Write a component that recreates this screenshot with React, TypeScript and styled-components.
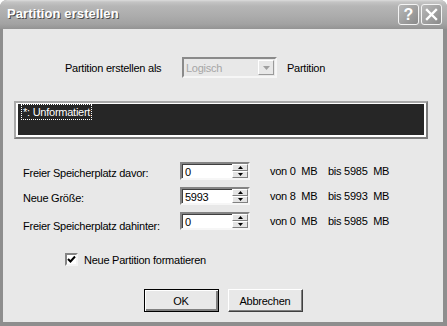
import { createGlobalStyle, styled } from "styled-components";

const GlobalStyle = createGlobalStyle`
    html, body {
        margin: 0;
        padding: 0;
        background: #ffffff;
    }
    * {
        box-sizing: border-box;
    }
`;

const App = () => {
    return (
        <>
            <GlobalStyle />
            <Window>
                <TitleBar>
                    <Title>Partition erstellen</Title>
                    <CaptionButtons>
                        <CaptionButton>?</CaptionButton>
                        <CaptionButton>
                            <svg width="13" height="13" viewBox="0 0 13 13">
                                <path d="M2 2 L11 11 M11 2 L2 11" stroke="#ffffff" strokeWidth="2.4" strokeLinecap="square" />
                            </svg>
                        </CaptionButton>
                    </CaptionButtons>
                </TitleBar>
                <Body>
                    <ComboRow>
                        <ComboLabel>Partition erstellen als</ComboLabel>
                        <Combo>
                            <ComboText>Logisch</ComboText>
                            <ComboButton>
                                <svg width="7" height="4" viewBox="0 0 7 4">
                                    <path d="M0 0 H7 L3.5 4 Z" fill="#a0a0a0" />
                                </svg>
                            </ComboButton>
                        </Combo>
                        <span>Partition</span>
                    </ComboRow>

                    <ListBox>
                        <ListInner>
                            <ListItem>*: Unformatiert</ListItem>
                        </ListInner>
                    </ListBox>

                    <SpinRows>
                        <SpinField label="Freier Speicherplatz davor:" value="0" from="0" to="5985" />
                        <SpinField label="Neue Größe:" value="5993" from="8" to="5993" />
                        <SpinField label="Freier Speicherplatz dahinter:" value="0" from="0" to="5985" low />
                    </SpinRows>

                    <CheckRow>
                        <CheckBox>
                            <svg width="9" height="9" viewBox="0 0 9 9">
                                <path d="M1 4 L3.5 6.5 L8 1.5" stroke="#000000" strokeWidth="2" fill="none" />
                            </svg>
                        </CheckBox>
                        <span>Neue Partition formatieren</span>
                    </CheckRow>

                    <ButtonRow>
                        <DialogButton $default>OK</DialogButton>
                        <DialogButton>Abbrechen</DialogButton>
                    </ButtonRow>
                </Body>
            </Window>
        </>
    );
};

type SpinProps = {
    label: string;
    value: string;
    from: string;
    to: string;
    low?: boolean;
};

const SpinField = ({ label, value, from, to, low }: SpinProps) => (
    <SpinRow>
        <SpinLabel $low={low}>{label}</SpinLabel>
        <SpinBox>
            <SpinValue>{value}</SpinValue>
            <SpinButtons>
                <SpinButton>
                    <svg width="5" height="3" viewBox="0 0 5 3">
                        <path d="M0 3 H5 L2.5 0 Z" fill="#000000" />
                    </svg>
                </SpinButton>
                <SpinButton>
                    <svg width="5" height="3" viewBox="0 0 5 3">
                        <path d="M0 0 H5 L2.5 3 Z" fill="#000000" />
                    </svg>
                </SpinButton>
            </SpinButtons>
        </SpinBox>
        <RangeFrom>{`von ${from}  MB`}</RangeFrom>
        <RangeTo>{`bis ${to}  MB`}</RangeTo>
    </SpinRow>
);

const Window = styled.div`
    width: 447px;
    height: 326px;
    display: flex;
    flex-direction: column;
    background: #8e8e8e;
    border-radius: 7px 7px 0 0;
    overflow: hidden;
    font-family: "Liberation Sans", Arial, sans-serif;
    font-size: 11px;
    letter-spacing: -0.25px;
    color: #000000;
`;

const TitleBar = styled.div`
    height: 29px;
    flex-shrink: 0;
    display: flex;
    align-items: center;
    justify-content: space-between;
    padding: 0 5px 2px 7px;
    background: linear-gradient(
        #dcdcdc 0px,
        #c4c4c4 2px,
        #b6b6b6 6px,
        #acacac 16px,
        #a2a2a2 24px,
        #939393 29px
    );
`;

const Title = styled.div`
    font-size: 13px;
    font-weight: bold;
    color: #ffffff;
    text-shadow: 1px 1px 0 #4a4a4a;
    letter-spacing: 0.1px;
`;

const CaptionButtons = styled.div`
    display: flex;
    gap: 2px;
    margin-top: 2px;
`;

const CaptionButton = styled.div`
    width: 21px;
    height: 21px;
    border: 1px solid #f4f4f4;
    border-radius: 3px;
    background: linear-gradient(135deg, #b8b8b8, #8a8a8a);
    display: flex;
    align-items: center;
    justify-content: center;
    color: #ffffff;
    font-size: 16px;
    font-weight: bold;
    letter-spacing: 0;
`;

const Body = styled.div`
    flex: 1;
    margin: 0 4px 4px 3px;
    background: #e8e8e8;
    display: flex;
    flex-direction: column;
    padding-top: 28px;
`;

const ComboRow = styled.div`
    height: 21px;
    display: flex;
    align-items: center;
    padding-left: 62px;
`;

const ComboLabel = styled.span`
    width: 117px;
`;

const Combo = styled.div`
    width: 95px;
    height: 21px;
    margin-right: 10px;
    display: flex;
    align-items: center;
    justify-content: space-between;
    border: 2px solid;
    border-color: #8a8a8a #f6f6f6 #f6f6f6 #8a8a8a;
    background: #e8e8e8;
    padding: 0 1px 0 2px;
`;

const ComboText = styled.span`
    color: #a6a6a6;
`;

const ComboButton = styled.div`
    width: 16px;
    height: 15px;
    display: flex;
    align-items: center;
    justify-content: center;
    border: 1px solid;
    border-color: #ffffff #9a9a9a #9a9a9a #ffffff;
    background: #e8e8e8;
`;

const ListBox = styled.div`
    margin: 23px 0 0 11px;
    width: 414px;
    height: 38px;
    border: 2px solid;
    border-color: #a8a8a8 #7c7c7c #7c7c7c #a8a8a8;
`;

const ListInner = styled.div`
    height: 100%;
    border-style: solid;
    border-color: #ffffff;
    border-width: 1px 2px 2px 2px;
    background: #262626;
    padding: 0 0 0 3px;
`;

const ListItem = styled.span`
    display: inline-block;
    height: 16px;
    line-height: 14px;
    padding: 0 1px;
    border: 1px dotted #ffffff;
    color: #ffffff;
`;

const SpinRows = styled.div`
    margin-top: 23px;
    display: flex;
    flex-direction: column;
    gap: 7px;
`;

const SpinRow = styled.div`
    height: 18px;
    display: flex;
    align-items: center;
    padding-left: 20px;
`;

const SpinLabel = styled.span<{ $low?: boolean }>`
    width: 157px;
    position: relative;
    top: ${(p) => (p.$low ? "5px" : "2px")};
`;

const SpinBox = styled.div`
    width: 70px;
    height: 18px;
    display: flex;
    align-items: stretch;
    justify-content: space-between;
    border: 2px solid;
    border-color: #848484 #f6f6f6 #f6f6f6 #848484;
    box-shadow: inset 1px 1px 0 #404040;
    background: #ffffff;
    padding: 1px 0 0 3px;
`;

const SpinValue = styled.span`
    line-height: 14px;
`;

const SpinButtons = styled.div`
    width: 16px;
    display: flex;
    flex-direction: column;
    margin-top: -1px;
`;

const SpinButton = styled.div`
    flex: 1;
    display: flex;
    align-items: center;
    justify-content: center;
    border: 1px solid;
    border-color: #ffffff #808080 #808080 #ffffff;
    background: #e4e4e4;
`;

const RangeFrom = styled.span`
    margin-left: 20px;
    width: 58px;
    white-space: pre;
`;

const RangeTo = styled.span`
    white-space: pre;
`;

const CheckRow = styled.div`
    margin-top: 23px;
    padding-left: 62px;
    display: flex;
    align-items: center;
    gap: 6px;
    height: 13px;
`;

const CheckBox = styled.div`
    width: 13px;
    height: 13px;
    border: 2px solid;
    border-color: #848484 #f4f4f4 #f4f4f4 #848484;
    background: #ffffff;
    display: flex;
    align-items: center;
    justify-content: center;
`;

const ButtonRow = styled.div`
    margin-top: 23px;
    display: flex;
    justify-content: center;
    gap: 9px;
`;

const DialogButton = styled.div<{ $default?: boolean }>`
    width: 75px;
    height: 23px;
    display: flex;
    align-items: center;
    justify-content: center;
    background: #e8e8e8;
    border: 1px solid;
    border-color: ${(p) => (p.$default ? "#000000" : "#ffffff #404040 #404040 #ffffff")};
    box-shadow: ${(p) =>
        p.$default
            ? "inset 1px 1px 0 #ffffff, inset -2px -2px 0 #808080"
            : "inset -1px -1px 0 #808080"};
`;

export default App;
